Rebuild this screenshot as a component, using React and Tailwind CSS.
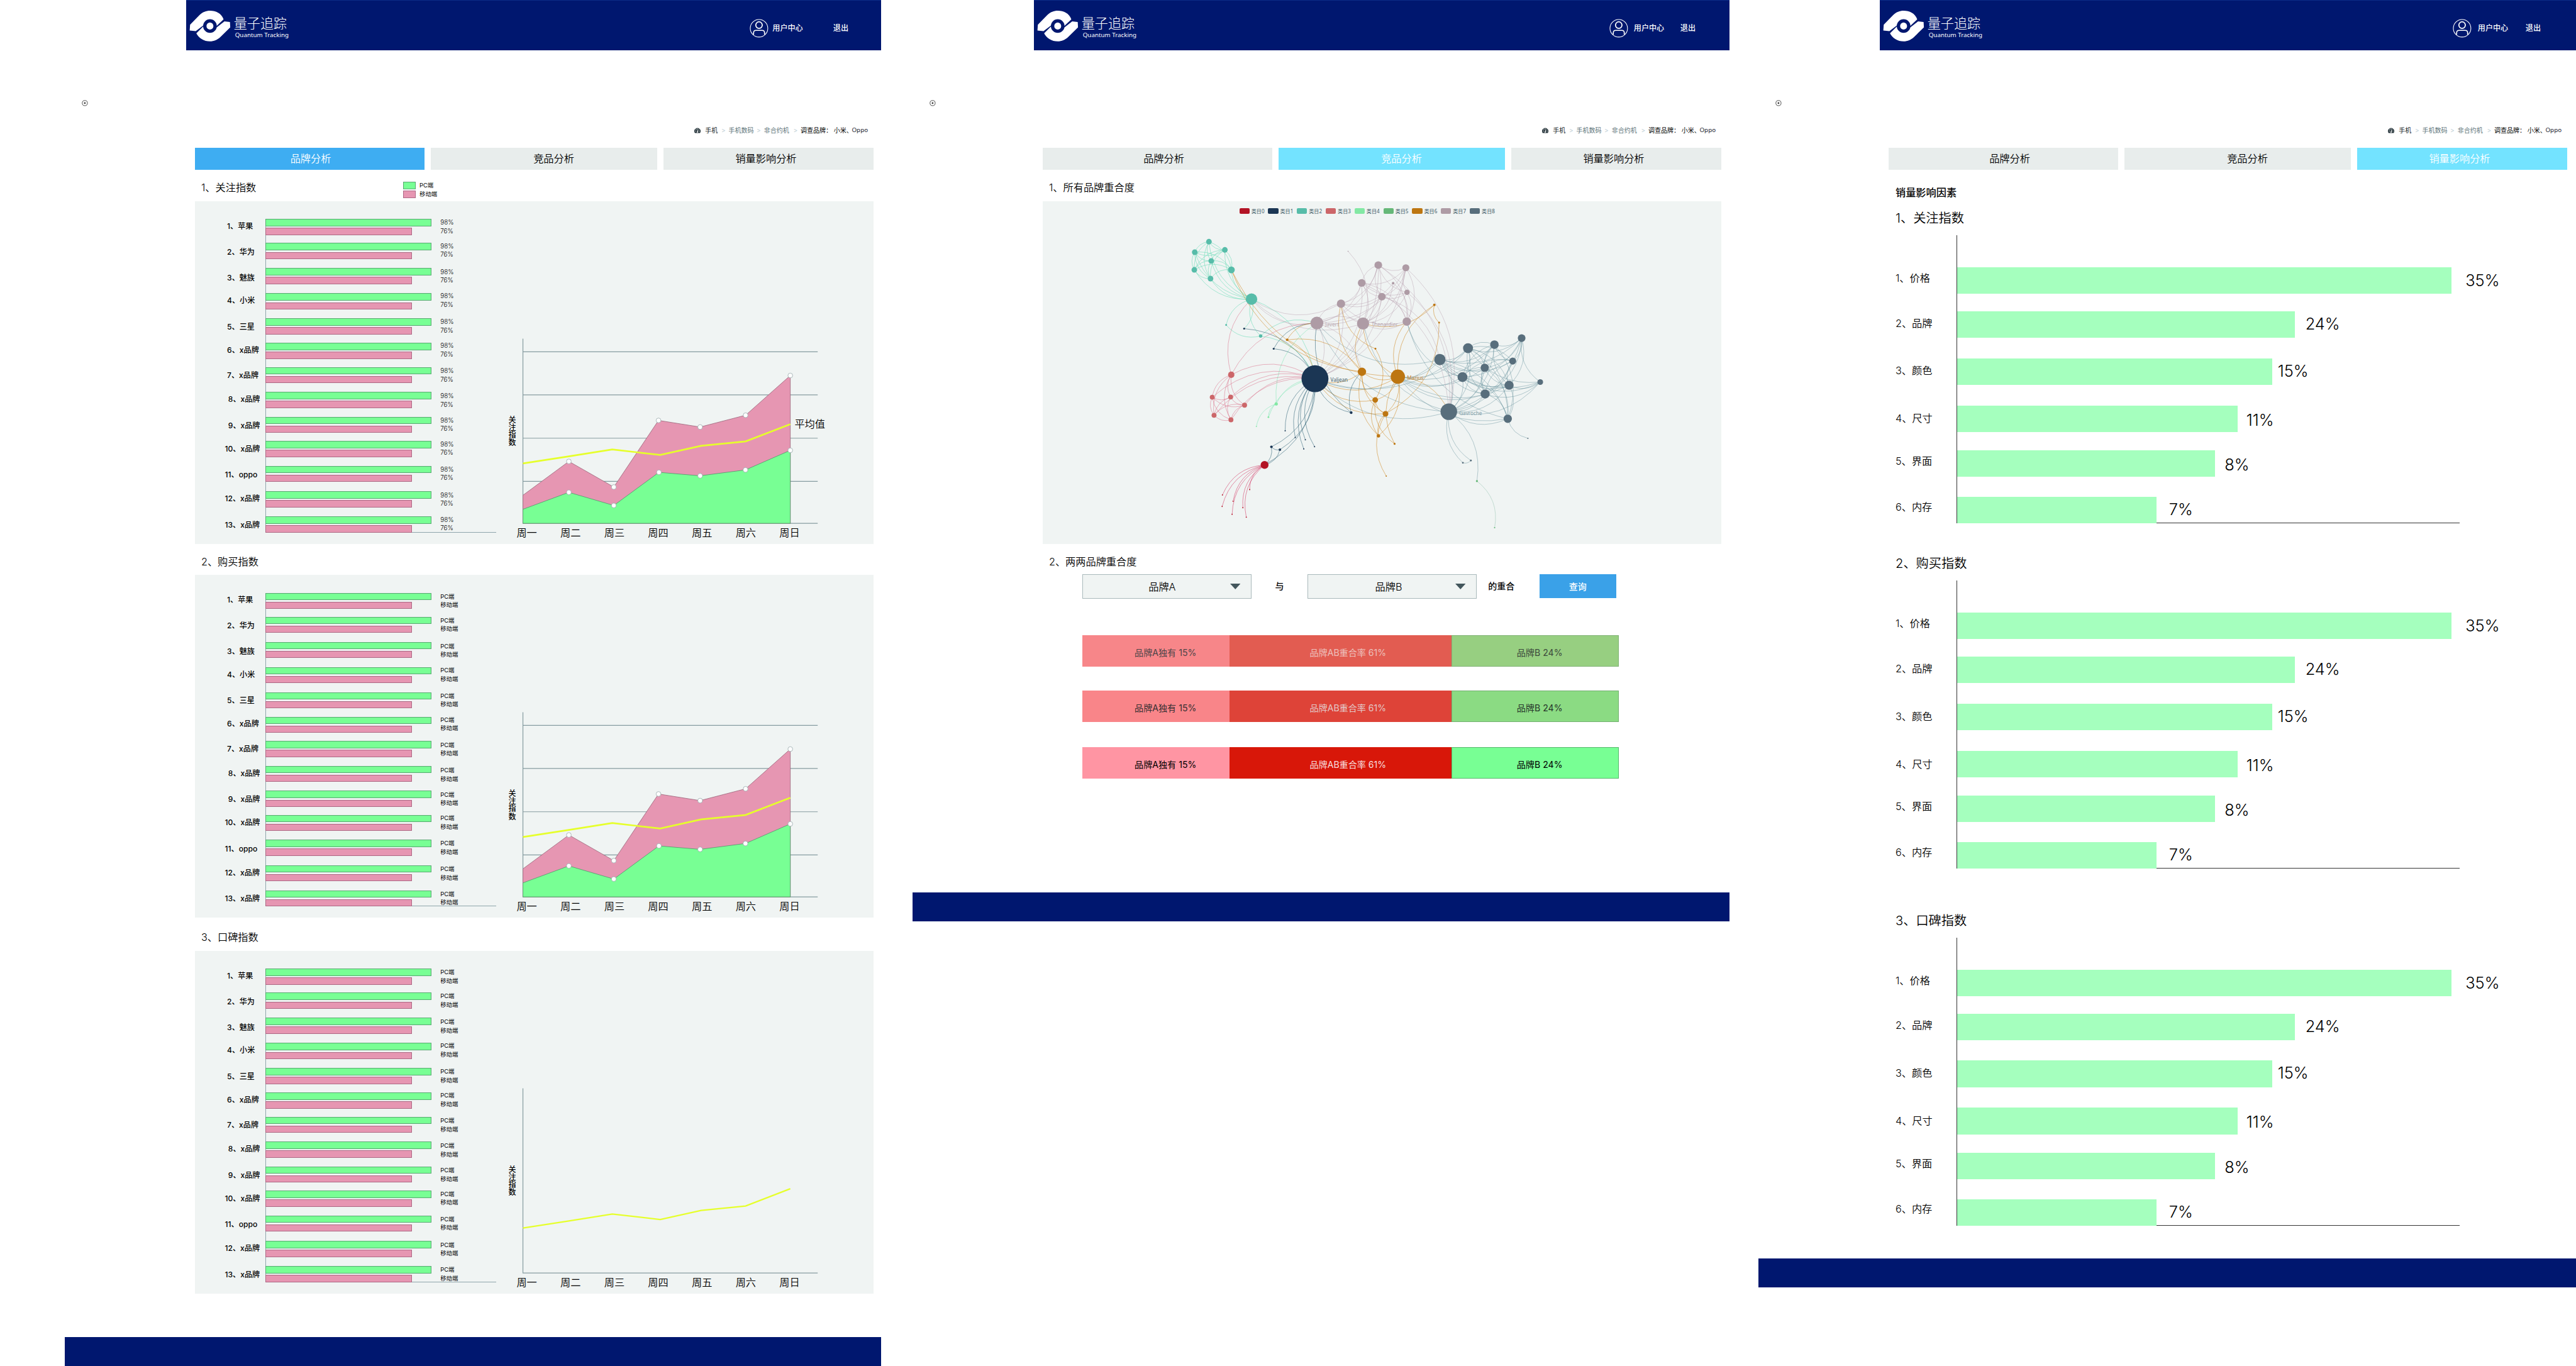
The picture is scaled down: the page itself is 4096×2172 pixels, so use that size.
import React from "react";

/* ---------- shared ---------- */

// margin that puts item i of a column at its top, given the height of each item
const gapBefore = (tops, i, h) => (i === 0 ? tops[0] : tops[i] - tops[i - 1] - h);

function Logo() {
  return (
    <div className="flex items-start">
      <svg viewBox="40 60 300 235" className="mt-[13.5px] ml-1 h-[53px] w-[67.7px]">
        <path
          fill="#fff"
          d="M47 209 L50 168 L116 100 C140 78 162 69 190 69 C232 69 270 86 286 130 L236 178 L144 172 L90 213 Z"
        />
        <path
          fill="#fff"
          d="M292 144 L331 149 L333 186 L264 254 C242 275 218 285 190 285 C148 285 112 262 94 228 L146 176 L238 186 Z"
        />
        <circle cx="190" cy="177" r="48" fill="#00176f" />
        <circle cx="190" cy="177" r="24.5" fill="#fff" />
      </svg>
      <div className="ml-[4px] mt-[23px] flex flex-col text-white">
        <span className="h-[27px] text-[21.1px] font-light leading-[27px]">量子追踪</span>
        <span className="ml-[2px] h-[12px] whitespace-nowrap font-['Noto_Sans',sans-serif] text-[9.8px] leading-[10px]">
          Quantum Tracking
        </span>
      </div>
    </div>
  );
}

function UserIcon() {
  return (
    <svg viewBox="0 0 44 44" className="h-[29.8px] w-[29.8px]" fill="none" stroke="#fff">
      <circle cx="22" cy="22" r="20.6" strokeWidth="1.6" />
      <circle cx="22" cy="14.6" r="7.6" strokeWidth="2.6" />
      <path d="M9.2 37 V33 C9.2 28.5 11.5 27 15 27 H29 C32.5 27 35 28.5 35 33 V37" strokeWidth="2.4" />
    </svg>
  );
}

function Header({ userClass, nameClass, exitClass }) {
  return (
    <header className="ml-[193px] flex h-20 justify-between border-t border-[#0b2a86] bg-[#00176f]">
      <Logo />
      <div className="flex h-[88px] w-[220px] items-center text-[12.1px] font-medium text-white">
        <div className={userClass}>
          <UserIcon />
          <span className={nameClass}>用户中心</span>
        </div>
        <span className={exitClass}>退出</span>
      </div>
    </header>
  );
}

function Gauge() {
  return (
    <svg viewBox="0 0 15 12.5" className="mt-[1px] h-[8.5px] w-[10px]">
      <path d="M1.5 12.5 A7.5 7.2 0 1 1 13.5 12.5 Z" fill="#2c3a40" />
      <g fill="#fff">
        <circle cx="3" cy="8" r="0.9" />
        <circle cx="4.4" cy="4.2" r="0.9" />
        <circle cx="7.5" cy="2.6" r="0.9" />
        <circle cx="12" cy="8" r="0.9" />
        <path d="M8.6 3.8 L9.4 4.2 L8.6 9 A1.5 1.5 0 1 1 6.9 8.8 Z" />
      </g>
      <path d="M10.5 4.2 L11.6 4.8" stroke="#fff" />
    </svg>
  );
}

function TopRow() {
  return (
    <div className="flex h-[155px]">
      <div className="w-[193px] pl-[27px] pt-[79px]">
        <svg viewBox="0 0 10 10" className="h-[9.8px] w-[9.8px]">
          <circle cx="5" cy="5" r="4.2" fill="none" stroke="#3c3c3c" strokeWidth="0.9" />
          <circle cx="5" cy="5" r="1.4" fill="#3c3c3c" />
        </svg>
      </div>
      <nav className="ml-[808px] mt-[119px] flex h-4 items-center whitespace-nowrap text-[10px] leading-4 text-[#61767b]">
        <span className="w-[17.2px]"><Gauge /></span>
        <span className="w-[25.8px] text-[#20282a]">手机</span>
        <span className="w-[11.5px] text-[#bccdd3]">&gt;</span>
        <span className="w-[44.6px]">手机数码</span>
        <span className="w-[11.6px] text-[#bccdd3]">&gt;</span>
        <span className="w-[46.9px]">非合约机</span>
        <span className="w-[11.5px] text-[#bccdd3]">&gt;</span>
        <span className="w-[52.6px] text-black">调查品牌：</span>
        <span className="w-[28.8px] text-black">小米、</span>
        <span className="font-['Noto_Sans',sans-serif] text-[9.8px] text-[#1c2530]">Oppo</span>
      </nav>
    </div>
  );
}

function Tabs({ first, second, third }) {
  return (
    <div className="ml-[207px] flex h-[35px] gap-2.5 whitespace-nowrap text-[16.2px] leading-[35px]">
      <div className={first}>品牌分析</div>
      <div className={second}>竞品分析</div>
      <div className={third}>销量影响分析</div>
    </div>
  );
}

function Heading({ children, tall }) {
  return (
    <h2
      className={
        tall
          ? "ml-[217px] h-[52.5px] pt-[17px] text-[16.2px] font-[350] leading-[29px] text-black"
          : "ml-[217px] h-[49.5px] pt-[14px] text-[16.2px] font-[350] leading-[29px] text-black"
      }
    >
      {children}
    </h2>
  );
}

/* ---------- brand analysis ---------- */

const BRANDS = [
  "1、苹果", "2、华为", "3、魅族", "4、小米", "5、三星", "6、x品牌", "7、x品牌",
  "8、x品牌", "9、x品牌", "10、x品牌", "11、oppo", "12、x品牌", "13、x品牌",
];
const BAR_TOPS = [0, 38.2, 77.9, 118.2, 157.9, 197.1, 235.4, 275.1, 314.7, 353, 392.6, 433, 473];
const LABEL_TOPS = [29.4, 70.1, 111.2, 148, 189.4, 226.2, 266.2, 304.8, 346.3, 383.4, 424.6, 462.7, 504.2];
const VALUE_TOPS = [-1, 36.9, 77.9, 116.2, 157.1, 195, 235, 275.2, 313.8, 351.6, 391.6, 432.6, 471.9];
const DAYS = ["周一", "周二", "周三", "周四", "周五", "周六", "周日"];

function BrandBars({ values }) {
  return (
    <>
      <div className="w-[64.3px] whitespace-nowrap text-[12.1px] font-medium text-black">
        {BRANDS.map((b, i) => (
          <div
            key={i}
            className={i >= 9 ? "h-5 leading-[21px]" : i >= 7 ? "h-5 pl-[5.3px] leading-[21px]" : "h-5 pl-[3.6px] leading-[21px]"}
            style={{ marginTop: gapBefore(LABEL_TOPS, i, 20) }}
          >
            {b}
          </div>
        ))}
      </div>
      <div className="mt-[28.8px] flex h-[498.5px] w-[367px] border-b border-l border-[#8fa5ab]">
        <div className="-ml-px w-[278.4px]">
          {BAR_TOPS.map((t, i) => (
            <div key={i} className="h-[25.5px]" style={{ marginTop: gapBefore(BAR_TOPS, i, 25.5) }}>
              <div className="h-[11.5px] w-[264px] border border-[#58a971] bg-[#78ff94]" />
              <div className="mt-[2.6px] h-[11.4px] w-[233px] border border-[#ad6884] bg-[#e696b2]" />
            </div>
          ))}
        </div>
        <div className="w-12 whitespace-nowrap text-black">
          {VALUE_TOPS.map((t, i) => (
            <div
              key={i}
              className={values[0] === "98%" ? "h-[26.6px] text-[9.9px] font-[350] leading-[13.3px]" : "h-[26.6px] text-[9.4px] leading-[13.6px]"}
              style={{ marginTop: gapBefore(VALUE_TOPS, i, 26.6) }}
            >
              <div>{values[0]}</div>
              <div>{values[1]}</div>
            </div>
          ))}
        </div>
      </div>
    </>
  );
}

const PINK = [[1228.5, 1163], [1336.4, 1083.5], [1442, 1143.7], [1547, 987.2], [1644.8, 1002.7], [1751.6, 975], [1856.6, 881.7]];
const GREEN = [[1228.5, 1196], [1336.4, 1156.2], [1442, 1187], [1548, 1109.2], [1644.8, 1117.3], [1751.3, 1103.5], [1856.6, 1057.5]];
const AVG = [[1228.5, 1088.3], [1336.4, 1071.7], [1438.4, 1055.5], [1551, 1068.3], [1647.2, 1047], [1751.6, 1036.5], [1856.6, 996]];
const pts = (a) => a.map((p) => p.join(",")).join(" ");

function WeekChart({ areas, average }) {
  return (
    <div className="flex">
      <div className="ml-[19.6px] mt-[342px] flex w-[13px] flex-col text-[12px] font-medium leading-[12.2px] text-black">
        <span>关</span>
        <span>注</span>
        <span>指</span>
        <span>数</span>
      </div>
      <div className="relative mt-[215.3px]">
        <svg viewBox="1213 790 717 445" className="h-[301.2px] w-[485.3px]">
          <g stroke="#859ba0" strokeWidth="1.8">
            <path d="M1228.5 795 V1229 H1921" fill="none" />
            {areas && <path d="M1228.5 826 H1921 M1228.5 927.3 H1921 M1228.5 1029 H1921 M1228.5 1130.5 H1921" />}
          </g>
          {areas && (
            <g strokeWidth="1.3">
              <polygon points={`1228.5,1229 ${pts(PINK)} 1856.6,1229`} fill="#e696b2" stroke="#a06b80" />
              <polygon points={`1228.5,1229 ${pts(GREEN)} 1856.6,1229`} fill="#78ff94" stroke="#5a9a70" />
            </g>
          )}
          <polyline
            points={pts(AVG)}
            transform={areas ? undefined : "translate(0 35)"}
            fill="none"
            stroke="#e6ff2b"
            strokeWidth={areas ? 4 : 3.4}
          />
          {areas &&
            [...PINK.slice(1), ...GREEN.slice(1)].map(([x, y], i) => (
              <circle key={i} cx={x} cy={y} r="5.6" fill="#fff" stroke="#9aa9ac" strokeWidth="1.2" />
            ))}
        </svg>
        {average && (
          <span className="absolute left-[442px] top-[127px] whitespace-nowrap text-[16.2px] font-[350] leading-[24px] text-black">
            平均值
          </span>
        )}
        <div className="flex whitespace-nowrap text-[16.2px] leading-[22px] text-black">
          {DAYS.map((d) => (
            <span key={d} className="w-[69.66px] font-[350]">{d}</span>
          ))}
        </div>
      </div>
    </div>
  );
}

function BrandPanel({ values, areas, average }) {
  return (
    <section className="ml-[207px] flex h-[545px] w-[1079px] bg-[#f0f4f3] pl-[47.5px]">
      <BrandBars values={values} />
      <WeekChart areas={areas} average={average} />
    </section>
  );
}

function BrandPage() {
  return (
    <div className="ml-[103px] flex h-full w-[1298px] flex-col">
      <Header userClass="ml-[11px] flex items-center" nameClass="ml-[6.5px]" exitClass="ml-auto mr-[52px]" />
      <TopRow />
      <Tabs
        first="w-[365px] bg-[#3eadf2] pl-[3px] text-center font-[350] text-white"
        second="w-[360px] bg-[#e8edec] pl-[31px] text-center font-[350] text-black"
        third="w-[334px] bg-[#e8edec] pr-[8px] text-center font-[350] text-black"
      />
      <div className="flex">
        <div className="w-[538px]">
          <Heading>1、关注指数</Heading>
        </div>
        <div className="mt-[19px] flex flex-col gap-[2px] whitespace-nowrap text-[9.4px] leading-[12px] text-black">
          <div className="flex h-3 items-center gap-[6px]">
            <span className="h-3 w-5 border border-[#58a971] bg-[#78ff94]" />
            <span>PC端</span>
          </div>
          <div className="flex h-3 items-center gap-[6px]">
            <span className="h-3 w-5 border border-[#ad6884] bg-[#e696b2]" />
            <span>移动端</span>
          </div>
        </div>
      </div>
      <BrandPanel values={["98%", "76%"]} areas average />
      <Heading>2、购买指数</Heading>
      <BrandPanel values={["PC端", "移动端"]} areas />
      <Heading tall>3、口碑指数</Heading>
      <BrandPanel values={["PC端", "移动端"]} />
      <footer className="mt-auto h-[46px] bg-[#00176f]" />
    </div>
  );
}

/* ---------- competitor analysis ---------- */

const CATEGORIES = [
  { swatch: "bg-[#b31425]", fill: "#b31425", line: "#d23b66" },
  { swatch: "bg-[#1b3654]", fill: "#1b3654", line: "#2f6477" },
  { swatch: "bg-[#57bca9]", fill: "#57bca9", line: "#4fd8ab" },
  { swatch: "bg-[#cc6669]", fill: "#cc6669", line: "#d8607f" },
  { swatch: "bg-[#83e8a4]", fill: "#83e8a4", line: "#80e6b4" },
  { swatch: "bg-[#66b878]", fill: "#66b878", line: "#84b8a4" },
  { swatch: "bg-[#bd7611]", fill: "#bd7611", line: "#cd7f12" },
  { swatch: "bg-[#ae9ba5]", fill: "#ae9ba5", line: "#baa2b0" },
  { swatch: "bg-[#586e7c]", fill: "#586e7c", line: "#6a949e" },
];
const EDGE_ALPHA = [0.6, 0.6, 0.5, 0.5, 0.6, 0.45, 0.55, 0.5, 0.5];

// id: [x, y, radius, category]
const NODES = {
  0: [2971, 1091.3, 9.2, 0], 1: [2872, 1161.7, 1.4, 0], 4: [2871.3, 1188.7, 1.4, 0], 5: [2897, 1176.7, 1.4, 0],
  6: [2894.7, 1207.3, 1.4, 0], 7: [2920, 1191.7, 1.4, 0], 8: [2928, 1214, 1.4, 0], 9: [2936, 1149.3, 1.4, 0],
  2: [2987, 1048.8, 3, 1], 3: [3007, 1055.5, 3, 1],
  10: [3019.3, 1011.3, 1.5, 1], 11: [3089.3, 888.9, 31.6, 1], 12: [2923, 771.2, 2.3, 1], 13: [3043, 1027, 1.5, 1],
  14: [3066.7, 1032.3, 1.5, 1], 15: [3063, 1053.8, 1.5, 1], 32: [3088.3, 1048.4, 1.5, 1], 33: [2992.3, 818.5, 2.3, 1],
  72: [3174.3, 968.5, 3.2, 1],
  16: [2893, 633.2, 8, 2], 17: [2840.3, 567.1, 6.6, 2], 18: [2807, 591.7, 6.6, 2], 19: [2877.7, 586.3, 6.6, 2],
  20: [2845.7, 612.2, 6.6, 2], 21: [2806, 633.2, 6.6, 2], 22: [2844, 653.8, 6.6, 2], 23: [2940.3, 702, 13.5, 2],
  30: [2880.7, 762.7, 2.2, 2], 31: [2961.7, 788.6, 4, 2],
  29: [2892.7, 879.6, 7.5, 3], 34: [2848, 932.3, 5.7, 3], 35: [2891.3, 931.9, 5.7, 3], 36: [2924, 951, 5.8, 3],
  37: [2852.3, 974.7, 5.8, 3], 38: [2892, 985.4, 5.8, 3],
  28: [2998.3, 948, 3.8, 4], 44: [2980, 979.2, 2.1, 4], 45: [2951.7, 1001, 1.4, 4],
  47: [3469.6, 1129.2, 2.4, 5], 46: [3511.2, 1238.6, 1.6, 5],
  43: [3024, 797.5, 3, 6], 39: [3369.6, 715.4, 3, 6], 52: [3380.8, 757.3, 2.2, 6], 50: [3231.3, 818.5, 2.2, 6],
  26: [3199.6, 872.5, 9.8, 6], 55: [3283.9, 884.1, 16.8, 6], 49: [3230.8, 938.6, 6.6, 6], 51: [3254.9, 971.2, 6.7, 6],
  54: [3238.4, 1023, 4, 6], 56: [3276.3, 1041.7, 2.3, 6], 53: [3256.7, 1117.6, 1.5, 6],
  40: [3167, 589.5, 1.2, 7], 68: [3238, 622, 9, 7], 71: [3302.7, 628.3, 8.2, 7], 69: [3199, 664, 9, 7],
  42: [3272.8, 664.5, 3, 7], 75: [3305.4, 685.9, 6.4, 7], 70: [3246.4, 696.2, 9, 7], 24: [3150.4, 712.7, 9.8, 7],
  27: [3093.8, 758.2, 15, 7], 25: [3202.2, 759.2, 14.2, 7], 41: [3304.9, 754.6, 9.8, 7],
  58: [3382.6, 843.9, 13.3, 8], 64: [3448.7, 817.1, 11.7, 8], 59: [3510.7, 808.7, 10, 8], 66: [3574.6, 793.5, 9, 8],
  60: [3553.6, 847.5, 8.2, 8], 61: [3488, 863.1, 9.7, 8], 62: [3435.7, 885, 11.6, 8], 63: [3545.1, 904.2, 10.7, 8],
  76: [3618.3, 896.6, 6.7, 8], 65: [3488.8, 924.7, 10.7, 8], 57: [3542, 982.8, 9.8, 8], 48: [3403.6, 966.3, 19.5, 8],
  67: [3589.3, 1028.8, 1.4, 8], 73: [3436.6, 1086.3, 2.1, 8], 74: [3455.4, 1081, 2.1, 8],
};

// source: targets
const LINKS = {
  1: [0], 2: [0], 3: [0, 2], 4: [0], 5: [0], 6: [0], 7: [0], 8: [0], 9: [0],
  10: [11], 11: [3, 2, 0], 12: [11], 13: [11], 14: [11], 15: [11],
  17: [16], 18: [16, 17], 19: [16, 17, 18], 20: [16, 17, 18, 19], 21: [16, 17, 18, 19, 20],
  22: [16, 17, 18, 19, 20, 21], 23: [16, 17, 18, 19, 20, 21, 22, 12, 11],
  24: [23, 11], 25: [24, 23, 11], 26: [24, 11, 16, 25], 27: [11, 23, 25, 24, 26], 28: [11, 27],
  29: [23, 27, 11], 30: [23], 31: [30, 11, 23, 27], 32: [11], 33: [11, 27],
  34: [11, 29], 35: [11, 34, 29], 36: [34, 35, 11, 29], 37: [34, 35, 36, 11, 29], 38: [34, 35, 36, 37, 11, 29],
  39: [25], 40: [25], 41: [24, 25], 42: [41, 25, 24], 43: [11, 26, 27], 44: [28, 11], 45: [28],
  47: [46], 48: [47, 25, 27, 11], 49: [26, 11], 50: [49, 24], 51: [49, 26, 11], 52: [51, 39], 53: [51],
  54: [51, 49, 26], 55: [51, 49, 39, 54, 26, 11, 16, 25, 41, 48], 56: [49, 55], 57: [55, 41, 48],
  58: [55, 48, 27, 57, 11], 59: [58, 55, 48, 57], 60: [48, 58, 59], 61: [48, 58, 60, 59, 57, 55],
  62: [55, 58, 59, 48, 57, 41, 61, 60], 63: [59, 48, 62, 57, 58, 61, 60, 55],
  64: [55, 62, 48, 63, 58, 61, 60, 59, 57, 11], 65: [63, 64, 48, 62, 58, 61, 60, 59, 57, 55],
  66: [64, 58, 59, 62, 65, 48, 63, 61, 60], 67: [57],
  68: [25, 11, 24, 27, 48, 41], 69: [25, 68, 11, 24, 27, 48, 41], 70: [25, 69, 68, 11, 24, 27, 41, 58],
  71: [27, 69, 68, 70, 11, 48, 41, 25], 72: [26, 27, 11], 73: [48], 74: [48, 73],
  75: [69, 68, 25, 48, 41, 70, 71], 76: [64, 65, 66, 63, 62, 48, 58],
};

const curve = ([x1, y1], [x2, y2]) => {
  const cx = (x1 + x2) / 2 - (y1 - y2) * 0.3;
  const cy = (y1 + y2) / 2 - (x2 - x1) * 0.3;
  return `M${x1} ${y1}Q${cx.toFixed(1)} ${cy.toFixed(1)} ${x2} ${y2}`;
};

function Network() {
  return (
    <svg viewBox="2450 512 1593 765" className="h-[518px] w-[1079px]" preserveAspectRatio="xMinYMin meet">
      <g fill="none" strokeWidth="1.4">
        {Object.entries(LINKS).map(([s, targets]) =>
          targets.map((t) => {
            const cat = NODES[s][3];
            return (
              <path key={`${s}-${t}`} d={curve(NODES[s], NODES[t])} stroke={CATEGORIES[cat].line} strokeOpacity={EDGE_ALPHA[cat]} />
            );
          })
        )}
      </g>
      {Object.entries(NODES).map(([id, [x, y, r, c]]) => (
        <circle key={id} cx={x} cy={y} r={r} fill={CATEGORIES[c].fill} />
      ))}
      <g className="font-['Noto_Sans',sans-serif] text-[12px]">
        <text x="3125.6" y="895.5" fill="#41606e">Valjean</text>
        <text x="3113.6" y="766.5" fill="#b9a8b1">Javert</text>
        <text x="3222" y="766.5" fill="#b9a8b1">Thenardier</text>
        <text x="3305.5" y="891" fill="#c98a38">Marius</text>
        <text x="3428" y="974" fill="#84a0a8">Gavroche</text>
      </g>
    </svg>
  );
}

function Select({ children, labelClass }) {
  return (
    <div className="flex h-[39px] w-[269px] items-center justify-end border border-[#a9b9bb] bg-[#f0f4f3] pr-[17px]">
      <span className={labelClass}>{children}</span>
      <svg viewBox="0 0 24 13" className="h-[9px] w-[16.5px]">
        <path d="M0 0H24L12 13Z" fill="#43565c" />
      </svg>
    </div>
  );
}

function OverlapRow({ rowClass, a, ab, b }) {
  return (
    <div className={rowClass}>
      <div className={a}>品牌A独有 15%</div>
      <div className={ab}>品牌AB重合率 61%</div>
      <div className={b}>品牌B 24%</div>
    </div>
  );
}

function CompetitorPage() {
  return (
    <div className="ml-[50px] flex h-full w-[1299px] flex-col">
      <Header userClass="ml-[29px] flex items-center" nameClass="ml-[9px]" exitClass="ml-auto mr-[54px]" />
      <TopRow />
      <Tabs
        first="w-[365px] bg-[#e8edec] pl-[20px] text-center font-[350] text-black"
        second="w-[360px] bg-[#73e3ff] pl-[31px] text-center font-[350] text-white"
        third="w-[334px] bg-[#e8edec] pr-[8px] text-center font-[350] text-black"
      />
      <Heading>1、所有品牌重合度</Heading>
      <section className="ml-[207px] h-[545px] w-[1079px] overflow-hidden bg-[#f0f4f3]">
        <div className="flex h-[27px] pl-[312.7px] pt-[11px]">
          {CATEGORIES.map((c, i) => (
            <div key={i} className="flex h-[9.5px] w-[45.8px] items-center gap-[2.8px] whitespace-nowrap">
              <span className={`${c.swatch} h-[9.5px] w-[16.2px] rounded-[2px]`} />
              <span className="font-['Noto_Sans','Noto_Sans_CJK_SC',sans-serif] text-[8.1px] leading-[9px] text-[#3f5b66]">类目{i}</span>
            </div>
          ))}
        </div>
        <Network />
      </section>
      <Heading>2、两两品牌重合度</Heading>
      <div className="-mt-px ml-[270px] flex items-start whitespace-nowrap text-[14px] font-medium leading-[38px] text-black">
        <Select labelClass="mr-[86px] text-[16.2px] font-[350]">品牌A</Select>
        <span className="w-[89px] text-center">与</span>
        <Select labelClass="mr-[84px] text-[16.2px] font-[350]">品牌B</Select>
        <span className="w-[99.7px] pr-[21px] text-center">的重合</span>
        <span className="h-[38.4px] w-[122.3px] bg-[#3aa1e8] text-center leading-[39px] text-white">查询</span>
      </div>
      <div className="ml-[270px] mt-[57.8px] w-[853px] whitespace-nowrap text-center text-[14.1px] leading-[56px]">
        <OverlapRow
          rowClass="flex h-[50px]"
          a="w-[234.4px] bg-[#f78689] pl-[30px] text-[#4c4548]"
          ab="w-[352.9px] bg-[#e25c51] pl-[23px] text-[#edc0bc]"
          b="flex-1 border border-[#80b274] bg-[#97cf81] pl-[14px] text-[#3c4a3c] leading-[54px]"
        />
        <OverlapRow
          rowClass="mt-[38.3px] flex h-[50px]"
          a="w-[234.4px] bg-[#f98589] pl-[30px] text-[#352f32]"
          ab="w-[352.9px] bg-[#de4338] pl-[23px] text-[#e3c8c7]"
          b="flex-1 border border-[#72b070] bg-[#8bdb83] pl-[14px] text-[#26362a] leading-[54px]"
        />
        <OverlapRow
          rowClass="mt-[39.8px] flex h-[50px]"
          a="w-[234.4px] bg-[#ff95a3] pl-[30px] text-black"
          ab="w-[352.9px] bg-[#d81709] pl-[23px] text-[#f7dede]"
          b="flex-1 border border-[#55b86c] bg-[#78ff94] pl-[14px] text-black leading-[54px]"
        />
      </div>
      <footer className="mt-[181px] h-[46px] bg-[#00176f]" />
    </div>
  );
}

/* ---------- sales factors ---------- */

const FACTORS = [
  { name: "1、价格", value: "35%", width: 786, shift: "ml-[22.5px] leading-[42.4px]" },
  { name: "2、品牌", value: "24%", width: 537, shift: "ml-[17px] leading-[39.5px]" },
  { name: "3、颜色", value: "15%", width: 501, shift: "ml-[9px] leading-[40px]" },
  { name: "4、尺寸", value: "11%", width: 446, shift: "ml-[14px] leading-[46px]" },
  { name: "5、界面", value: "8%", width: 410, shift: "ml-[15.5px] leading-[46px]" },
  { name: "6、内存", value: "7%", width: 317, shift: "ml-[20px] leading-[40px]" },
];
const FACTOR_TOPS = [50.8, 121, 195.6, 270.6, 341.8, 416];
const FACTOR_LABEL_TOPS = [54.9, 126.6, 202.5, 278.5, 346, 418.6];

function FactorChart({ title, className }) {
  return (
    <section className={className}>
      <h3 className="h-7 text-[20.2px] font-[350] leading-[29px] text-black">{title}</h3>
      <div className="mt-[14px] flex h-[458px]">
        <div className="w-[96.7px] whitespace-nowrap text-[16.2px] font-[350] text-black">
          {FACTORS.map((f, i) => (
            <div key={f.name} className="h-6 leading-[26px]" style={{ marginTop: gapBefore(FACTOR_LABEL_TOPS, i, 24) }}>
              {f.name}
            </div>
          ))}
        </div>
        <div className="h-[458px] w-[800px] border-b border-l border-[#333]">
          {FACTORS.map((f, i) => (
            <div key={f.name} className="flex h-[42.2px]" style={{ marginTop: gapBefore(FACTOR_TOPS, i, 42.2) }}>
              <div className="h-[42.2px] shrink-0 bg-[#a5ffbe]" style={{ width: f.width }} />
              <span className={`${f.shift} text-[25.4px] font-light text-black`}>{f.value}</span>
            </div>
          ))}
        </div>
      </div>
    </section>
  );
}

function SalesPage() {
  return (
    <div className="ml-[46px] flex h-full w-[1300px] flex-col">
      <Header userClass="ml-[24px] flex items-center" nameClass="ml-[10px]" exitClass="ml-auto mr-[56px]" />
      <TopRow />
      <Tabs
        first="w-[365px] bg-[#e8edec] pl-[20px] text-center font-[350] text-black"
        second="w-[360px] bg-[#e8edec] pl-[31px] text-center font-[350] text-black"
        third="w-[334px] bg-[#73e3ff] pr-[8px] text-center font-[350] text-white"
      />
      <h2 className="ml-[218px] mt-6 h-6 text-[16.2px] font-medium leading-[25px] text-black">销量影响因素</h2>
      <FactorChart title="1、关注指数" className="ml-[218px] mt-[14px] h-[500px]" />
      <FactorChart title="2、购买指数" className="ml-[218px] mt-[49.3px] h-[500px]" />
      <FactorChart title="3、口碑指数" className="ml-[218px] mt-[67.6px] h-[500px]" />
      <footer className="mt-[52px] h-[46px] bg-[#00176f]" />
    </div>
  );
}

export default function App() {
  return (
    <main className="flex h-[2172px] w-[4096px] overflow-hidden bg-white font-['Inter','Noto_Sans_CJK_SC',sans-serif]">
      <BrandPage />
      <CompetitorPage />
      <SalesPage />
    </main>
  );
}
